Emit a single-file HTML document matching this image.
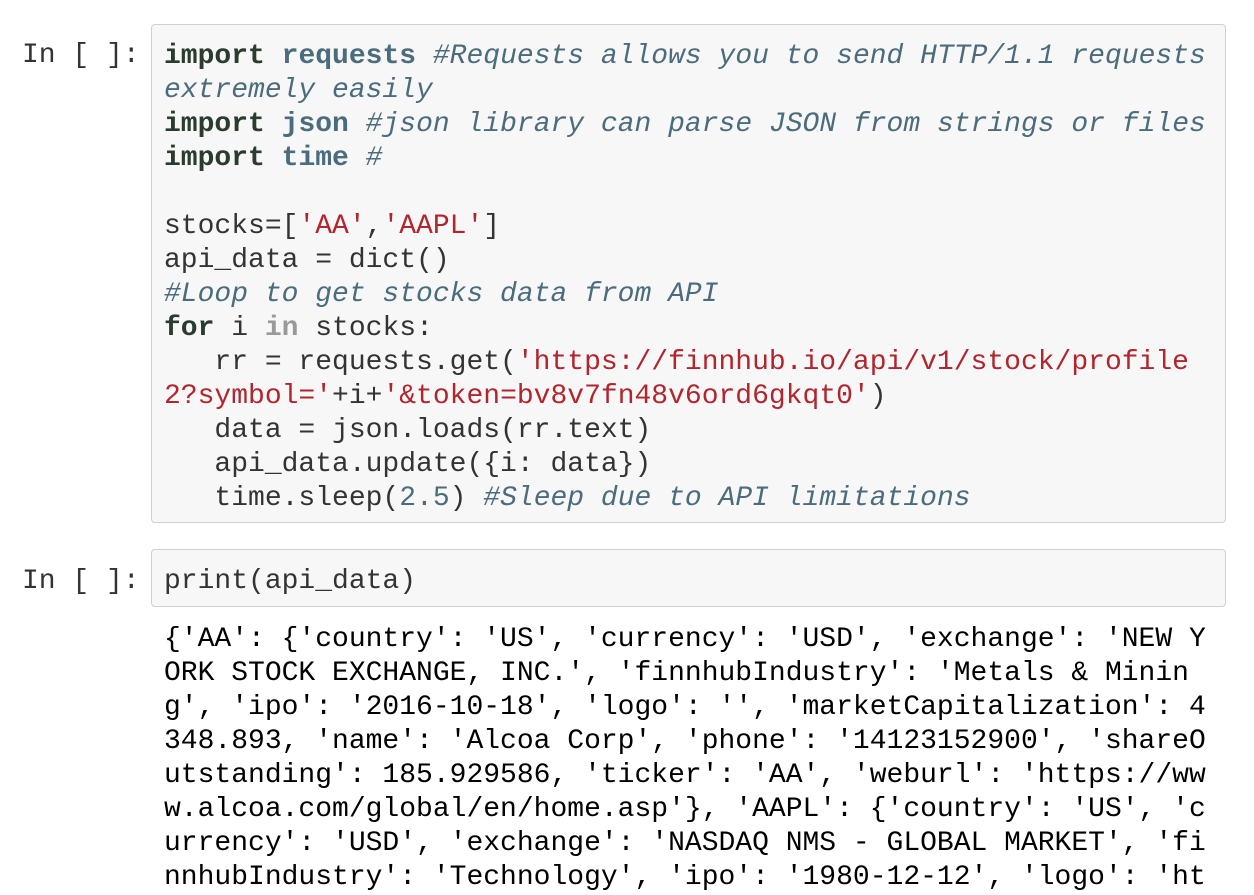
<!DOCTYPE html>
<html><head><meta charset="utf-8"><style>
body{margin:0;background:#fff;width:1254px;height:880px;overflow:hidden;font-family:"Liberation Mono",monospace;font-size:28px;}
.p{position:absolute;left:22px;color:#333;line-height:34px;white-space:pre}
.box{position:absolute;left:151px;width:1075px;background:#f7f7f7;border:1px solid #cfcfcf;border-radius:4px;box-sizing:border-box}
pre{margin:0;font:inherit;line-height:34px;color:#333;white-space:pre}
.k{color:#2a3c2e;font-weight:bold}
.n{color:#4b6c7c;font-weight:bold}
.c{color:#4b6c7c;font-style:italic}
.s{color:#b0252e}
.i{color:#999;font-weight:bold}
.m{color:#4b6c7c}
.out{position:absolute;left:164px;top:623px;color:#000}
</style></head><body>
<div class="p" style="top:39px">In [ ]:</div>
<div class="box" style="top:24px;height:499px">
<pre style="padding:15px 0 0 12px"><span class="k">import</span> <span class="n">requests</span> <span class="c">#Requests allows you to send HTTP/1.1 requests
extremely easily</span>
<span class="k">import</span> <span class="n">json</span> <span class="c">#json library can parse JSON from strings or files</span>
<span class="k">import</span> <span class="n">time</span> <span class="c">#</span>

stocks=[<span class="s">'AA'</span>,<span class="s">'AAPL'</span>]
api_data = dict()
<span class="c">#Loop to get stocks data from API</span>
<span class="k">for</span> i <span class="i">in</span> stocks:
   rr = requests.get(<span class="s">'https://finnhub.io/api/v1/stock/profile
2?symbol='</span>+i+<span class="s">'&amp;token=bv8v7fn48v6ord6gkqt0'</span>)
   data = json.loads(rr.text)
   api_data.update({i: data})
   time.sleep(<span class="m">2.5</span>) <span class="c">#Sleep due to API limitations</span></pre>
</div>
<div class="p" style="top:565px">In [ ]:</div>
<div class="box" style="top:549px;height:58px">
<pre style="padding:15px 0 0 12px">print(api_data)</pre>
</div>
<pre class="out">{'AA': {'country': 'US', 'currency': 'USD', 'exchange': 'NEW Y
ORK STOCK EXCHANGE, INC.', 'finnhubIndustry': 'Metals &amp; Minin
g', 'ipo': '2016-10-18', 'logo': '', 'marketCapitalization': 4
348.893, 'name': 'Alcoa Corp', 'phone': '14123152900', 'shareO
utstanding': 185.929586, 'ticker': 'AA', 'weburl': 'https://ww
w.alcoa.com/global/en/home.asp'}, 'AAPL': {'country': 'US', 'c
urrency': 'USD', 'exchange': 'NASDAQ NMS - GLOBAL MARKET', 'fi
nnhubIndustry': 'Technology', 'ipo': '1980-12-12', 'logo': 'ht</pre>
</body></html>
